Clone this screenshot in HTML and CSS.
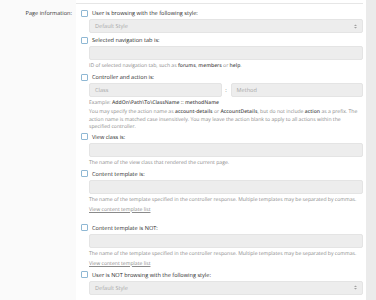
FILE: index.html
```html
<!DOCTYPE html>
<html>
<head>
<meta charset="utf-8">
<link rel="stylesheet" href="styles.css">
</head>
<body>
<div class="page">
  <div class="main">
    <div class="labelcol"><span class="rowlabel">Page information:</span></div>
    <div class="fields">
      <div class="opt">
        <div class="chk"><span class="box"></span><span>User is browsing with the following style:</span></div>
        <div class="input select"><span class="ph">Default Style</span><svg class="arrow" width="3" height="5" viewBox="0 0 3 5"><path d="M0 2 L1.5 0.5 L3 2 Z M0 3 L1.5 4.5 L3 3 Z" fill="#a0a0a0"/></svg></div>
      </div>
      <div class="opt">
        <div class="chk"><span class="box"></span><span>Selected navigation tab is:</span></div>
        <div class="input"></div>
        <div class="hint">ID of selected navigation tab, such as <b>forums</b>, <b>members</b> or <b>help</b>.</div>
      </div>
      <div class="opt tight">
        <div class="chk"><span class="box"></span><span>Controller and action is:</span></div>
        <div class="pair">
          <div class="input half"><span class="ph">Class</span></div>
          <span class="colon">:</span>
          <div class="input half"><span class="ph">Method</span></div>
        </div>
        <div class="hint">Example: <b>AddOn\Path\To\ClassName :: methodName</b></div>
        <div class="hint desc">You may specify the action name as <b>account-details</b> or <b>AccountDetails</b>, but do not include <b>action</b> as a prefix. The action name is matched case insensitively. You may leave the action blank to apply to all actions within the specified controller.</div>
      </div>
      <div class="opt">
        <div class="chk"><span class="box"></span><span>View class is:</span></div>
        <div class="input"></div>
        <div class="hint">The name of the view class that rendered the current page.</div>
      </div>
      <div class="opt">
        <div class="chk"><span class="box"></span><span>Content template is:</span></div>
        <div class="input"></div>
        <div class="hint">The name of the template specified in the controller response. Multiple templates may be separated by commas.</div>
        <div class="hint"><a class="link">View content template list</a></div>
      </div>
      <div class="opt spaced">
        <div class="chk"><span class="box"></span><span>Content template is NOT:</span></div>
        <div class="input"></div>
        <div class="hint">The name of the template specified in the controller response. Multiple templates may be separated by commas.</div>
        <div class="hint"><a class="link">View content template list</a></div>
      </div>
      <div class="opt">
        <div class="chk"><span class="box"></span><span>User is NOT browsing with the following style:</span></div>
        <div class="input select"><span class="ph">Default Style</span><svg class="arrow" width="3" height="5" viewBox="0 0 3 5"><path d="M0 2 L1.5 0.5 L3 2 Z M0 3 L1.5 4.5 L3 3 Z" fill="#a0a0a0"/></svg></div>
      </div>
    </div>
  </div>
  <div class="strip"></div>
</div>
</body>
</html>
```
FILE: styles.css
```css
html, body {
  margin: 0;
  padding: 0;
}
body {
  font-family: "Open Sans", "Liberation Sans", sans-serif;
  color: #2a2a2a;
  background: #fafafa;
  text-rendering: geometricPrecision;
}
.page {
  display: flex;
  width: 376px;
  height: 300px;
  overflow: hidden;
}
.main {
  flex: 1;
  display: grid;
  grid-template-columns: 76px 1fr;
  align-items: start;
}
.strip {
  width: 10px;
  background: #ebebeb;
}
.labelcol {
  background: #fafafa;
  align-self: stretch;
  padding-top: 8px;
  padding-right: 4px;
  text-align: right;
  font-size: 5.6px;
  line-height: 10px;
  color: #333;
}
.fields {
  background: #fff;
  align-self: stretch;
  padding: 8px 3px 0 5px;
  position: relative;
}
.fields::before {
  content: "";
  position: absolute;
  left: 0;
  right: 3px;
  top: 3px;
  border-top: 1px solid #e6e6e6;
}
.opt {
  margin-bottom: 2px;
}
.opt.tight {
  margin-bottom: 0;
}
.opt.spaced {
  margin-top: 9px;
}
.chk {
  display: flex;
  align-items: center;
  height: 10px;
  font-size: 5.6px;
  color: #2a2a2a;
}
.box {
  width: 5px;
  height: 5px;
  border: 1px solid #8fb8d4;
  border-radius: 1px;
  background: #fff;
  margin-right: 4px;
  flex: none;
}
.input {
  margin: 1px 0 0 8px;
  height: 14px;
  background: #ededed;
  border: 1px solid #e4e4e4;
  border-radius: 2px;
  box-sizing: border-box;
  display: flex;
  align-items: center;
  padding: 0 5px;
  font-size: 5.6px;
}
.ph {
  color: #a8a8a8;
}
.select {
  justify-content: space-between;
}
.arrow {
  display: block;
}
.pair {
  display: flex;
  align-items: center;
  margin-left: 8px;
  margin-top: 1px;
}
.pair .input {
  margin: 0;
  flex: 1;
}
.colon {
  width: 9px;
  text-align: center;
  font-size: 5.6px;
  color: #666;
}
.hint {
  margin: 2px 0 0 8px;
  font-size: 5.1px;
  line-height: 8px;
  color: #8a8a8a;
  white-space: nowrap;
}
.hint b {
  color: #555;
  font-weight: 600;
}
.hint.desc {
  line-height: 7.5px;
  margin-top: 2px;
  padding-right: 2px;
  white-space: normal;
}
.link {
  color: #8a8a8a;
  text-decoration: underline;
}
```
